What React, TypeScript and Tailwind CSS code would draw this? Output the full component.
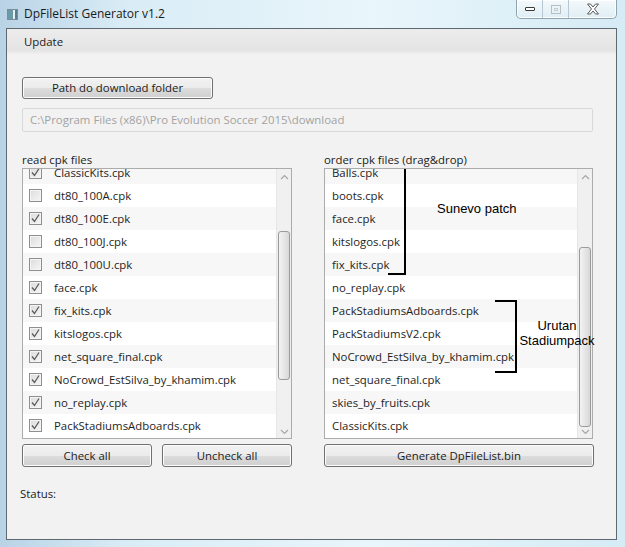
import React from "react";

const leftItems: [string, boolean][] = [
  ["ClassicKits.cpk", true],
  ["dt80_100A.cpk", false],
  ["dt80_100E.cpk", true],
  ["dt80_100J.cpk", false],
  ["dt80_100U.cpk", false],
  ["face.cpk", true],
  ["fix_kits.cpk", true],
  ["kitslogos.cpk", true],
  ["net_square_final.cpk", true],
  ["NoCrowd_EstSilva_by_khamim.cpk", true],
  ["no_replay.cpk", true],
  ["PackStadiumsAdboards.cpk", true],
];

const rightItems = [
  "Balls.cpk",
  "boots.cpk",
  "face.cpk",
  "kitslogos.cpk",
  "fix_kits.cpk",
  "no_replay.cpk",
  "PackStadiumsAdboards.cpk",
  "PackStadiumsV2.cpk",
  "NoCrowd_EstSilva_by_khamim.cpk",
  "net_square_final.cpk",
  "skies_by_fruits.cpk",
  "ClassicKits.cpk",
];

function Btn({ label, className }: { label: string; className: string }) {
  return (
    <div
      className={
        "flex items-center justify-center rounded-[3px] border border-[#707070] bg-[linear-gradient(#f2f2f2_0%,#ebebeb_50%,#dddddd_50%,#cfcfcf_100%)] text-[#1b1b1b] shadow-[inset_0_0_0_1px_#fcfcfc] " +
        className
      }
    >
      {label}
    </div>
  );
}

function CheckBox({ checked }: { checked: boolean }) {
  return (
    <div className="flex h-[13px] w-[13px] items-center justify-center border border-[#8e8f8f] bg-[linear-gradient(135deg,#dcdcdc,#f6f6f6)] shadow-[inset_0_0_0_1px_#f4f4f4]">
      {checked && (
        <svg width="11" height="11" viewBox="0 0 11 11">
          <path d="M2 5.5 L4.5 8.5 L9 1.5" fill="none" stroke="#5a5a5a" strokeWidth="1.3" />
        </svg>
      )}
    </div>
  );
}

function ScrollBar({ thumbTop, thumbHeight }: { thumbTop: number; thumbHeight: number }) {
  return (
    <div className="relative h-full w-[15px] shrink-0 border-l border-[#e6e6e6] bg-[#f0f0f0]">
      <svg className="absolute left-[3px] top-[5px]" width="9" height="6" viewBox="0 0 9 6">
        <path d="M1 5 L4.5 1.5 L8 5" fill="none" stroke="#a6a6a6" strokeWidth="1.2" />
      </svg>
      <div
        className="absolute left-[1px] w-[12px] rounded-[3px] border border-[#9a9a9a] bg-[linear-gradient(90deg,#f3f3f3,#e6e6e6_50%,#d8d8d8)]"
        style={{ top: thumbTop, height: thumbHeight }}
      />
      <svg className="absolute bottom-[3px] left-[3px]" width="9" height="6" viewBox="0 0 9 6">
        <path d="M1 1 L4.5 4.5 L8 1" fill="none" stroke="#a6a6a6" strokeWidth="1.2" />
      </svg>
    </div>
  );
}

export default function App() {
  return (
    <div
      className="relative h-[547px] w-[625px] overflow-hidden bg-[linear-gradient(90deg,#b9d3e6,#d9ecf6_20%,#e9f6fb_60%,#d5ebf5)] text-[11.4px]"
      style={{ fontFamily: '"Open Sans", "Noto Sans", sans-serif' }}
    >
      {/* title bar */}
      <div className="flex h-[28px] items-center pl-[7px]">
        <div className="flex h-[11px] w-[11px] items-stretch border border-[#7c8c96] bg-white">
          <div className="w-[5px] bg-[#6a9aa8]" />
          <div className="flex-1 bg-[#e8f0f4]" />
          <div className="w-[2px] bg-[#5b7e8c]" />
        </div>
        <span className="ml-[6px] text-[12px] leading-none text-[#1a1a1a]">DpFileList Generator v1.2</span>
      </div>

      {/* window buttons */}
      <div className="absolute right-[8px] top-0 flex h-[19px] overflow-hidden rounded-b-[5px] border border-t-0 border-[#8ea2b0] bg-[linear-gradient(#f4f9fb,#dfeef5)] shadow-[inset_0_0_0_1px_#ffffff]">
        <div className="flex w-[26px] items-center justify-center border-r border-[#b8c8d2]">
          <div className="h-[4px] w-[10px] rounded-[1px] border border-[#3c3c3c] bg-white" />
        </div>
        <div className="flex w-[26px] items-center justify-center border-r border-[#b8c8d2]">
          <div className="flex h-[9px] w-[10px] items-center justify-center border border-[#b7bfc4]">
            <div className="h-[3px] w-[4px] border border-[#c7cdd1]" />
          </div>
        </div>
        <div className="flex w-[47px] items-center justify-center">
          <svg width="14" height="12" viewBox="0 0 14 12">
            <path
              d="M1.5 1 H4.5 L7 4 L9.5 1 H12.5 L8.5 6 L12.5 11 H9.5 L7 8 L4.5 11 H1.5 L5.5 6 Z"
              fill="#ffffff"
              stroke="#5a5a5a"
              strokeWidth="1"
            />
          </svg>
        </div>
      </div>

      {/* client area */}
      <div className="ml-[6px] mr-[8px] flex h-[512px] flex-col border border-[#5d6870] bg-[#f2f2f2]">
        {/* menu */}
        <div className="flex h-[25px] items-center bg-[linear-gradient(#ececec,#e4e4e4_85%,#f0f0f0)] pl-[17px] text-[#1a1a1a]">
          Update
        </div>

        <div className="flex flex-col pl-[15px] pr-[23px] pt-[23px]">
          <Btn label="Path do download folder" className="h-[22px] w-[191px]" />
          <div className="mt-[9px] flex h-[24px] items-center rounded-[2px] border border-[#d9d9d9] bg-[#f2f2f2] pl-[7px] text-[#a2a2a2]">
            C:\Program Files (x86)\Pro Evolution Soccer 2015\download
          </div>

          <div className="mt-[20px] flex gap-[32px]">
            {/* left column */}
            <div className="flex w-[270px] flex-col">
              <div className="h-[15px] leading-[15px] text-[#1a1a1a]">read cpk files</div>
              <div className="mt-[1px] flex h-[271px] overflow-hidden border border-[#acacac] bg-white">
                <div className="flex-1 overflow-hidden">
                  <div className="mt-[-8px]">
                    {leftItems.map(([name, checked], i) => (
                      <div
                        key={name}
                        className={
                          "flex h-[23px] items-center pl-[6px] text-[#1e1e1e] " +
                          (i % 2 === 0 ? "bg-[#f7f7f7]" : "bg-white")
                        }
                      >
                        <CheckBox checked={checked} />
                        <span className="ml-[12px]">{name}</span>
                      </div>
                    ))}
                  </div>
                </div>
                <ScrollBar thumbTop={62} thumbHeight={149} />
              </div>
              <div className="mt-[5px] flex gap-[10px]">
                <Btn label="Check all" className="h-[23px] w-[130px]" />
                <Btn label="Uncheck all" className="h-[23px] w-[130px]" />
              </div>
            </div>

            {/* right column */}
            <div className="flex w-[269px] flex-col">
              <div className="h-[15px] leading-[15px] text-[#1a1a1a]">order cpk files (drag&amp;drop)</div>
              <div className="relative mt-[1px] flex h-[271px] border border-[#acacac] bg-white">
                <div className="flex-1 overflow-hidden">
                  <div className="mt-[-8px]">
                    {rightItems.map((name, i) => (
                      <div
                        key={name}
                        className={
                          "flex h-[23px] items-center pl-[7px] text-[#1e1e1e] " +
                          (i % 2 === 0 ? "bg-[#f7f7f7]" : "bg-white")
                        }
                      >
                        {name}
                      </div>
                    ))}
                  </div>
                </div>
                <ScrollBar thumbTop={78} thumbHeight={180} />

                {/* hand-drawn annotations */}
                <div className="absolute left-[63px] top-0 h-[106px] w-[18px] border-b-2 border-r-2 border-black" />
                <div
                  className="absolute left-[112px] top-[33px] text-[13px] leading-none text-black"
                  style={{ fontFamily: '"Liberation Sans", Arial, sans-serif' }}
                >
                  Sunevo patch
                </div>
                <div className="absolute left-[170px] top-[131px] h-[73px] w-[22px] border-y-2 border-r-2 border-black" />
                <div
                  className="absolute left-[192px] top-[149px] w-[80px] text-center text-[13px] leading-[15px] text-black"
                  style={{ fontFamily: '"Liberation Sans", Arial, sans-serif' }}
                >
                  Urutan
                  <br />
                  Stadiumpack
                </div>
              </div>
              <div className="mt-[5px]">
                <Btn label="Generate DpFileList.bin" className="h-[23px] w-[270px]" />
              </div>
            </div>
          </div>

          <div className="ml-[-2px] mt-[18px] text-[#1a1a1a]">Status:</div>
        </div>
      </div>
    </div>
  );
}
